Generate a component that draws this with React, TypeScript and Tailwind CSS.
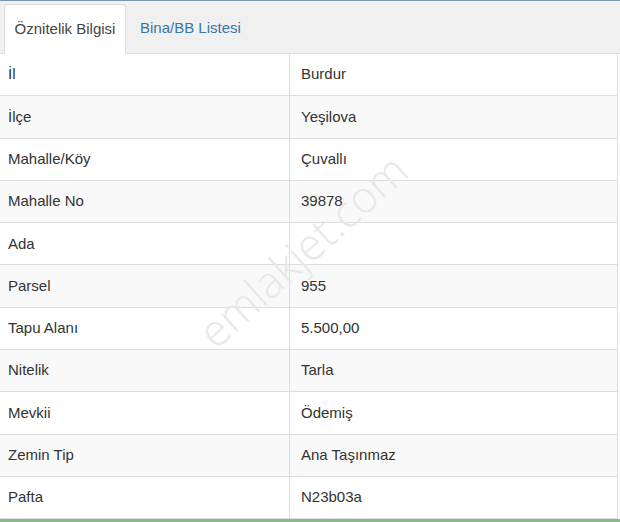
import React from "react";

const rows: [string, string][] = [
  ["İl", "Burdur"],
  ["İlçe", "Yeşilova"],
  ["Mahalle/Köy", "Çuvallı"],
  ["Mahalle No", "39878"],
  ["Ada", ""],
  ["Parsel", "955"],
  ["Tapu Alanı", "5.500,00"],
  ["Nitelik", "Tarla"],
  ["Mevkii", "Ödemiş"],
  ["Zemin Tip", "Ana Taşınmaz"],
  ["Pafta", "N23b03a"],
];

export default function App() {
  return (
    <div
      className="relative w-[620px] h-[522px] overflow-hidden bg-white text-[#333]"
      style={{ fontFamily: '"Liberation Sans", Arial, sans-serif' }}
    >
      <div className="h-px bg-[#7d96ad]" />
      <div className="flex h-[53px] items-end bg-[#f0f0f0] pl-[4px] border-b border-[#ddd]">
        <div className="-mb-px h-[50px] w-[122px] flex items-center justify-center bg-white border border-[#ddd] border-b-white rounded-t-[3px] text-[15px] text-[#444]">
          Öznitelik Bilgisi
        </div>
        <div className="h-[50px] px-[14px] flex items-center text-[15px] text-[#3a76a8]">
          Bina/BB Listesi
        </div>
      </div>
      <div className="border-r border-[#ddd] mr-[2px]">
        {rows.map(([k, v], i) => (
          <div
            key={k}
            className={`flex h-[42.3px] border-b border-[#ddd] text-[15px] ${
              i % 2 === 1 ? "bg-[#f9f9f9]" : "bg-white"
            }`}
          >
            <div className="w-[290px] border-r border-[#ddd] pl-[8px] flex items-center">{k}</div>
            <div className="flex-1 pl-[11px] flex items-center">{v}</div>
          </div>
        ))}
      </div>
      <div className="absolute left-0 right-0 bottom-0 h-[3px] bg-[#8db88d]" />
      <div
        className="pointer-events-none absolute left-[302px] top-[250px] -translate-x-1/2 -translate-y-1/2 -rotate-[42deg] text-[44px] text-[#e8e8e8] whitespace-nowrap"
        style={{ fontFamily: '"Open Sans", "Liberation Sans", sans-serif', fontWeight: 300 }}
      >
        emlakjet.com
      </div>
    </div>
  );
}
